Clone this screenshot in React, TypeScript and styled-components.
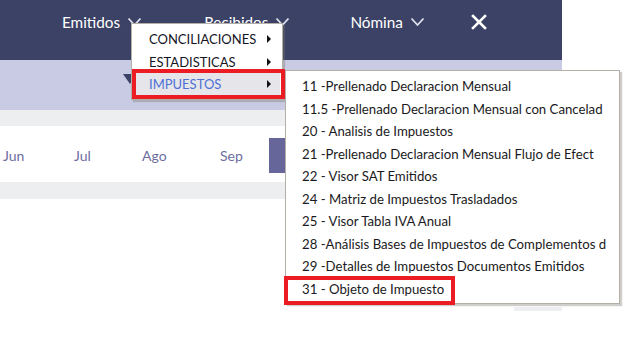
import React from "react";
import styled, { createGlobalStyle } from "styled-components";

const Global = createGlobalStyle`
  html, body { margin: 0; padding: 0; background: #ffffff; }
  body { font-family: Lato, "Open Sans", sans-serif; }
`;

const Page = styled.div`
  position: relative;
  width: 641px;
  height: 351px;
  overflow: hidden;
`;

const Main = styled.div`
  width: 562px;
  display: flex;
  flex-direction: column;
`;

const Header = styled.header`
  height: 60px;
  background: #3b4266;
  display: flex;
  align-items: center;
  padding-left: 62px;
  padding-bottom: 16px;
  box-sizing: border-box;
`;

const NavItem = styled.div<{ $ml: number }>`
  display: flex;
  align-items: center;
  gap: 7px;
  margin-left: ${(p) => p.$ml}px;
  color: #ffffff;
  font-size: 15.3px;
  font-family: Lato, sans-serif;
`;

const Chevron = () => (
  <svg width="15" height="10" viewBox="0 0 15 10">
    <path d="M1.5 1.5 L7.5 8 L13.5 1.5" fill="none" stroke="#dfe1ee" strokeWidth="1.8" />
  </svg>
);

const CloseIcon = () => (
  <svg width="16" height="16" viewBox="0 0 16 16">
    <path d="M2 2 L14 14 M14 2 L2 14" stroke="#ffffff" strokeWidth="2.6" strokeLinecap="square" />
  </svg>
);

const FilterBand = styled.div`
  height: 50px;
  background: #c8cbe3;
  position: relative;
`;

const Caret = styled.div`
  position: absolute;
  left: 123px;
  top: 14px;
  width: 0;
  height: 0;
  border-left: 7px solid transparent;
  border-right: 7px solid transparent;
  border-top: 10px solid #3b4266;
`;

const GrayStrip = styled.div<{ $h: number }>`
  height: ${(p) => p.$h}px;
  background: #eceeef;
`;

const MonthsRow = styled.div`
  height: 56px;
  background: #ffffff;
  display: grid;
  grid-template-columns: 71px 68px 78px 49px 60px;
  align-items: center;
  padding-left: 3px;
`;

const Month = styled.span`
  font-size: 14px;
  color: #6d6d9f;
  padding-top: 2px;
`;

const ActiveMonth = styled.div`
  height: 35px;
  background: #66669a;
  margin-top: 2px;
`;

const Tail = styled.div`
  height: 4px;
  width: 48px;
  margin-left: 514px;
  margin-top: 108px;
  background: #eceeef;
`;

const Menu = styled.div<{ $left: number; $top: number; $width: number }>`
  position: absolute;
  left: ${(p) => p.$left}px;
  top: ${(p) => p.$top}px;
  width: ${(p) => p.$width}px;
  background: #ffffff;
  border: 1px solid #b3afa6;
  box-shadow: 2px 2px 1px rgba(120, 115, 105, 0.35);
  padding: 4px 0 3px;
  box-sizing: border-box;
  display: flex;
  flex-direction: column;
`;

const MenuItem = styled.div<{ $active?: boolean }>`
  height: 22.5px;
  display: flex;
  align-items: center;
  justify-content: space-between;
  padding: 0 9px 0 15px;
  margin: 0 2px;
  font-size: 13px;
  color: ${(p) => (p.$active ? "#4d6fd6" : "#15151f")};
  background: ${(p) => (p.$active ? "#e6e6ea" : "transparent")};
`;

const Arrow = styled.span`
  width: 0;
  height: 0;
  border-top: 4px solid transparent;
  border-bottom: 4px solid transparent;
  border-left: 4px solid #111;
`;

const SubItem = styled.div`
  height: 22.5px;
  display: flex;
  align-items: center;
  padding-left: 16px;
  font-size: 13.2px;
  color: #1a1a22;
  white-space: nowrap;
  overflow: hidden;
`;

const Callout = styled.div<{ $left: number; $top: number; $w: number; $h: number }>`
  position: absolute;
  left: ${(p) => p.$left}px;
  top: ${(p) => p.$top}px;
  width: ${(p) => p.$w}px;
  height: ${(p) => p.$h}px;
  border: 4px solid #ec1c24;
  box-sizing: border-box;
  pointer-events: none;
`;

const subItems = [
  "11 -Prellenado Declaracion Mensual",
  "11.5 -Prellenado Declaracion Mensual con Cancelad",
  "20 - Analisis de Impuestos",
  "21 -Prellenado Declaracion Mensual Flujo de Efect",
  "22 - Visor SAT Emitidos",
  "24 - Matriz de Impuestos Trasladados",
  "25 - Visor Tabla IVA Anual",
  "28 -Análisis Bases de Impuestos de Complementos d",
  "29 -Detalles de Impuestos Documentos Emitidos",
  "31 - Objeto de Impuesto",
];

export default function App() {
  return (
    <>
      <Global />
      <Page>
        <Main>
          <Header>
            <NavItem $ml={0}>
              Emitidos <Chevron />
            </NavItem>
            <NavItem $ml={62}>
              Recibidos <Chevron />
            </NavItem>
            <NavItem $ml={60}>
              Nómina <Chevron />
            </NavItem>
            <NavItem $ml={46}>
              <CloseIcon />
            </NavItem>
          </Header>
          <FilterBand>
            <Caret />
          </FilterBand>
          <GrayStrip $h={16} />
          <MonthsRow>
            <Month>Jun</Month>
            <Month>Jul</Month>
            <Month>Ago</Month>
            <Month>Sep</Month>
            <ActiveMonth />
          </MonthsRow>
          <GrayStrip $h={17} />
          <Tail />
        </Main>

        <Menu $left={131} $top={23} $width={152}>
          <MenuItem>
            CONCILIACIONES <Arrow />
          </MenuItem>
          <MenuItem>
            ESTADISTICAS <Arrow />
          </MenuItem>
          <MenuItem $active>
            IMPUESTOS <Arrow />
          </MenuItem>
        </Menu>

        <Menu $left={285} $top={70} $width={335}>
          {subItems.map((s) => (
            <SubItem key={s}>{s}</SubItem>
          ))}
        </Menu>

        <Callout $left={132} $top={69} $w={153} $h={30} />
        <Callout $left={284} $top={276} $w={171} $h={29} />
      </Page>
    </>
  );
}
